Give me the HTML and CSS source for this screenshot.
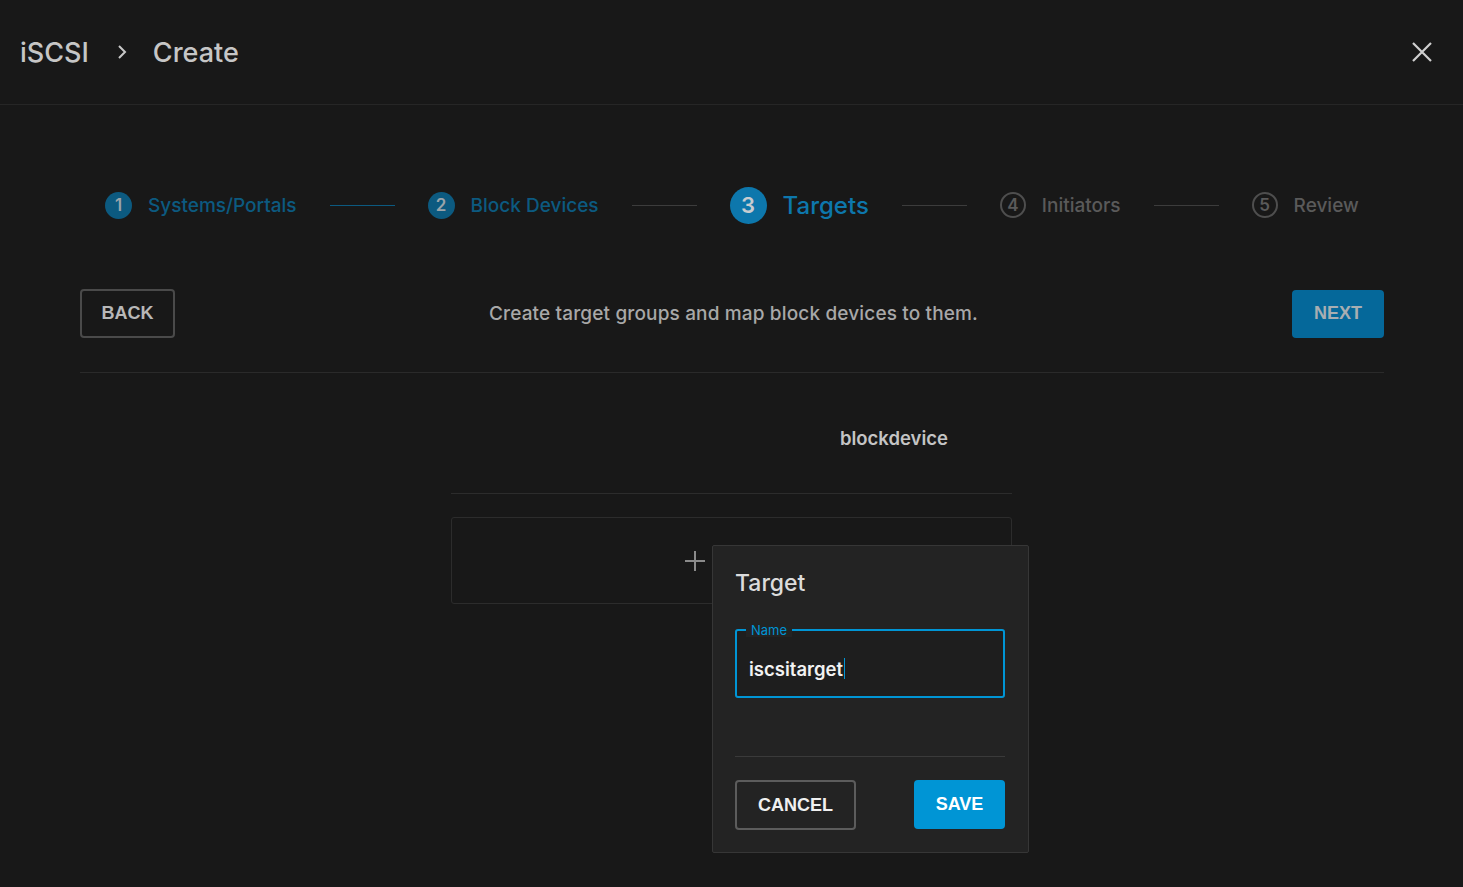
FILE: index.html
```html
<!DOCTYPE html>
<html>
<head>
<meta charset="utf-8">
<link rel="stylesheet" href="styles.css">
</head>
<body>
<div class="page">
  <header class="header">
    <div class="crumbs">
      <span class="crumb">iSCSI</span>
      <svg class="chev" width="14" height="16" viewBox="0 0 14 16"><path d="M4 2 L10 8 L4 14" fill="none" stroke="#c8c8c8" stroke-width="2"/></svg>
      <span class="crumb">Create</span>
    </div>
    <svg class="close" width="22" height="22" viewBox="0 0 22 22"><path d="M2 2 L20 20 M20 2 L2 20" stroke="#d0d0d0" stroke-width="2.2"/></svg>
  </header>

  <div class="stepper">
    <div class="step done"><span class="num">1</span><span class="lbl">Systems/Portals</span></div>
    <div class="line done-line"></div>
    <div class="step done"><span class="num">2</span><span class="lbl">Block Devices</span></div>
    <div class="line"></div>
    <div class="step active"><span class="num">3</span><span class="lbl">Targets</span></div>
    <div class="line"></div>
    <div class="step todo"><span class="num">4</span><span class="lbl">Initiators</span></div>
    <div class="line"></div>
    <div class="step todo"><span class="num">5</span><span class="lbl">Review</span></div>
  </div>

  <div class="actions">
    <button class="btn btn-outline">BACK</button>
    <p class="desc">Create target groups and map block devices to them.</p>
    <button class="btn btn-next">NEXT</button>
  </div>

  <div class="mapping">
    <div class="col-head"><span class="bd">blockdevice</span></div>
    <div class="add-box">
      <svg width="22" height="22" viewBox="0 0 22 22"><path d="M11 1 V21 M1 11 H21" stroke="#8a8a8a" stroke-width="2"/></svg>
    </div>
  </div>

  <div class="popup">
    <h2 class="pop-title">Target</h2>
    <div class="field">
      <span class="field-label">Name</span>
      <span class="field-value">iscsitarget</span><span class="caret"></span>
    </div>
    <div class="pop-footer">
      <button class="btn btn-cancel">CANCEL</button>
      <button class="btn btn-save">SAVE</button>
    </div>
  </div>
</div>
</body>
</html>
```
FILE: styles.css
```css
* { box-sizing: border-box; }
html, body { margin: 0; padding: 0; background: #181818; }
body { font-family: "Inter", "Open Sans", sans-serif; color: #c8c8c8; }
.page { position: relative; width: 1463px; height: 887px; overflow: hidden; }

.header {
  height: 105px;
  border-bottom: 1px solid #262626;
  display: flex; align-items: center; justify-content: space-between;
  padding: 0 30px 0 20px;
}
.crumbs { display: flex; align-items: center; }
.crumb { font-size: 27px; font-weight: 500; color: #c6c6c6; }
.chev { margin: 0 24px 0 26px; }

.stepper {
  display: flex; align-items: center;
  padding: 0 0 0 105px;
  margin-top: 81px;
  height: 38px;
}
.step { display: flex; align-items: center; gap: 16px; }
.num {
  display: flex; align-items: center; justify-content: center;
  width: 27px; height: 27px; border-radius: 50%;
  font-size: 17px; font-weight: 600;
}
.lbl { font-size: 19px; font-weight: 500; }
.step.done .num { background: #0c5a80; color: #9aa4aa; }
.step.done .lbl { color: #0c5a80; }
.step.active .num { width: 37px; height: 37px; background: #0d77ac; color: #c8ccd0; font-size: 22px; }
.step.active .lbl { color: #0d77ac; font-size: 24px; font-weight: 500; }
.step.todo .num { width: 26px; height: 26px; border: 2px solid #4e4e4e; color: #5a5a5a; }
.step.todo .lbl { color: #5a5a5a; }
.line { height: 1px; width: 65px; background: #3c3c3c; margin: 0 33px; }
.line.done-line { background: #0c5a80; }

.actions {
  margin: 65px 79px 0 80px;
  display: flex; align-items: center; justify-content: space-between;
  padding-bottom: 34px;
  border-bottom: 1px solid #2a2a2a;
}
.btn {
  font-family: "Liberation Sans", Arial, sans-serif;
  font-weight: 700; font-size: 18px;
  border-radius: 4px; cursor: pointer;
}
.btn-outline { width: 95px; height: 49px; background: transparent; border: 2px solid #4a4a4a; color: #b8b8b8; }
.desc { margin: 0; font-size: 19px; color: #a8a8a8; font-weight: 500; letter-spacing: 0.15px; }
.btn-next { width: 92px; height: 48px; background: #05689a; border: none; color: #a8aeb2; }

.mapping { width: 561px; margin: 0 0 0 451px; }
.col-head {
  height: 121px; border-bottom: 1px solid #2c2c2c;
  display: flex; justify-content: flex-end; padding: 54px 64px 0 0;
}
.bd { font-size: 18.5px; font-weight: 600; color: #c4c4c4; }
.add-box {
  margin-top: 23px; height: 87px;
  border: 1px solid #2c2c2c; border-radius: 3px;
  display: flex; align-items: center; justify-content: center;
  padding-right: 73px;
}

.popup {
  position: absolute; left: 712px; top: 545px;
  width: 317px; height: 308px;
  background: #232323; border: 1px solid #363636; border-radius: 2px;
  padding: 21px 23px 0 22px;
}
.pop-title { margin: 0; font-size: 23px; font-weight: 500; color: #dcdcdc; line-height: 32px; }
.field {
  position: relative; margin-top: 30px; height: 69px;
  border: 2px solid #0095d5; border-radius: 3px;
  display: flex; align-items: center; padding: 10px 12px 0;
  background: #1e1e1e;
}
.field-label {
  position: absolute; left: 9px; top: -7px; padding: 0 5px;
  font-size: 13px; color: #0095d5; background: #232323; line-height: 13px;
}
.field-value { font-size: 18.5px; font-weight: 600; color: #f2f2f2; }
.caret { width: 1px; height: 21px; background: #0095d5; margin-left: 1px; }
.pop-footer {
  margin-top: 58px; border-top: 1px solid #3a3a3a;
  display: flex; justify-content: space-between; padding-top: 23px;
}
.btn-cancel { width: 121px; height: 50px; background: transparent; border: 2px solid #5c5c5c; color: #f0f0f0; }
.btn-save { width: 91px; height: 49px; background: #0095d5; border: none; color: #ffffff; }
```
